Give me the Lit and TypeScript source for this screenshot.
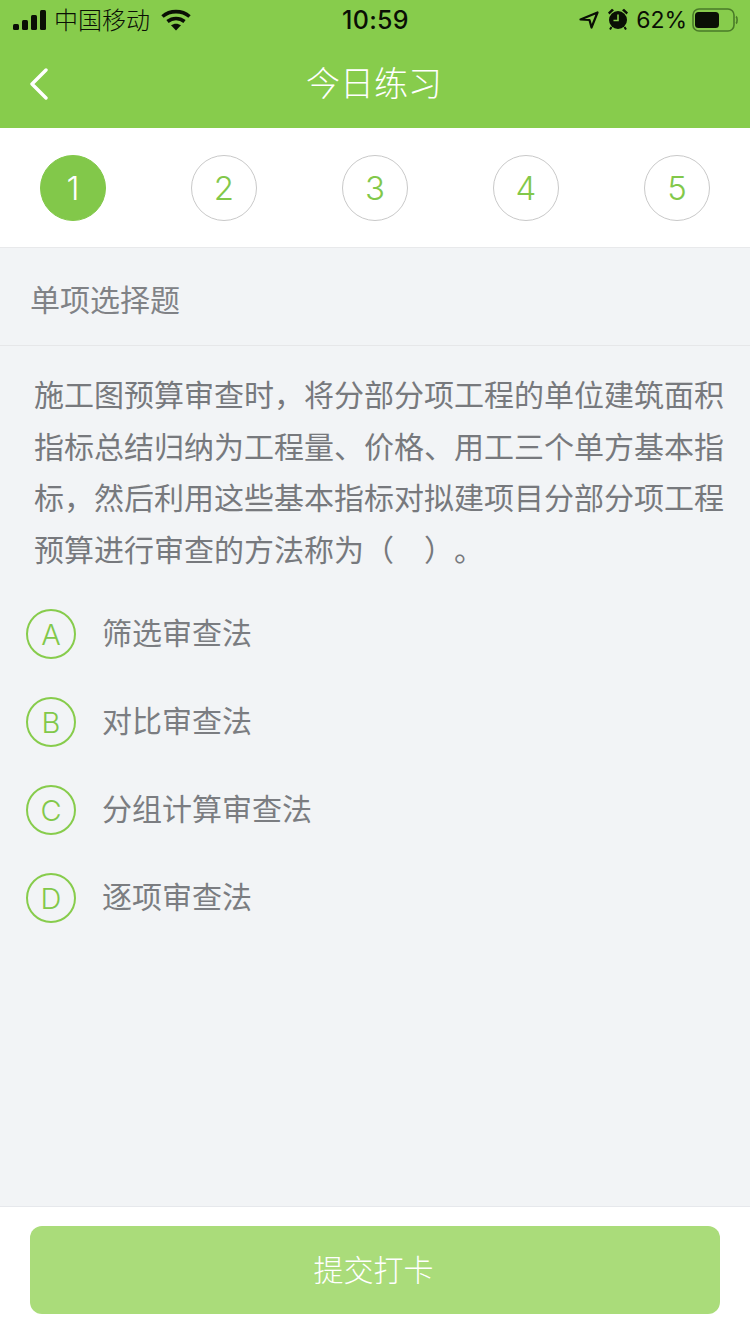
import { LitElement, html, css } from "lit";
import { customElement } from "lit/decorators.js";

@customElement("app-root")
export class AppRoot extends LitElement {
  static styles = css`
    :host {
      display: flex;
      flex-direction: column;
      width: 750px;
      height: 1334px;
      background: #f2f4f6;
      font-family: "Noto Sans CJK SC", "Liberation Sans", sans-serif;
      overflow: hidden;
    }
    .head { background: #87cc4c; flex: none; }
    .status {
      height: 40px;
      display: flex;
      align-items: center;
      padding: 0 12px 0 13px;
      color: #0a0f05;
      font-size: 25px;
    }
    .side { flex: 1; display: flex; align-items: center; }
    .side.right { justify-content: flex-end; }
    .carrier { font-size: 24px; margin-left: 8px; line-height: 38px; height: 40px; font-weight: 300; }
    .wifi { margin-left: 11px; }
    .time { font-size: 25px; font-weight: 500; letter-spacing: 0.3px; font-family: "Inter", sans-serif; }
    .pct { font-size: 23px; margin-left: 7px; font-weight: 400; font-family: "Inter", sans-serif; }
    .alarm { margin-left: 8px; margin-bottom: 2px; }
    .batt { margin-left: 5px; }
    .nav {
      height: 88px;
      display: grid;
      grid-template-columns: 1fr auto 1fr;
      align-items: center;
      padding-left: 30px;
    }
    .title {
      color: #fff;
      font-size: 34px;
      font-weight: 300;
      line-height: 84px;
      height: 88px;
      margin-left: -32px;
    }
    .back { display: block; }
    .steps {
      flex: none;
      height: 120px;
      box-sizing: border-box;
      background: #fff;
      border-bottom: 1px solid #e8e9eb;
      display: flex;
      justify-content: space-between;
      align-items: flex-start;
      padding: 27px 40px 0;
    }
    .step {
      width: 66px;
      height: 66px;
      box-sizing: border-box;
      border: 1px solid #c9c9c9;
      border-radius: 50%;
      display: flex;
      align-items: center;
      justify-content: center;
      color: #82c84a;
      font-size: 33px;
      font-weight: 300;
      font-family: "Inter", "Liberation Sans", sans-serif;
    }
    .step.on { background: #82c84a; border-color: #82c84a; color: #fff; }
    .kind {
      flex: none;
      height: 98px;
      box-sizing: border-box;
      border-bottom: 1px solid #e6e7e9;
      padding-left: 30px;
      line-height: 101px;
      font-weight: 400;
      font-size: 30px;
      color: #808286;
    }
    .main { flex: 1; min-height: 0; padding: 22px 26px 0 34px; font-weight: 400; }
    .q { margin: 0; font-size: 30px; line-height: 51.6px; color: #77797d; white-space: nowrap; text-spacing-trim: space-all; }
    .opts { margin: 35px 0 0 -8px; display: flex; flex-direction: column; gap: 38px; }
    .opt { display: flex; align-items: center; height: 50px; gap: 26px; font-size: 30px; color: #7b7d81; }
    .opt span { line-height: 44px; height: 50px; }
    .letter {
      width: 50px;
      height: 50px;
      box-sizing: border-box;
      border: 2px solid #87cc4c;
      border-radius: 50%;
      display: flex;
      align-items: center;
      justify-content: center;
      color: #82c84a;
      font-size: 29px;
      font-weight: 300;
      font-family: "Inter", "Liberation Sans", sans-serif;
    }
    .foot {
      flex: none;
      height: 128px;
      box-sizing: border-box;
      background: #fff;
      border-top: 1px solid #e6e8ec;
      padding: 19px 30px 0;
    }
    .btn {
      height: 88px;
      border-radius: 12px;
      background: #aadc7a;
      color: #fff;
      font-size: 30px;
      font-weight: 300;
      display: flex;
      align-items: center;
      justify-content: center;
      padding: 0 3px 5px 0;
      box-sizing: border-box;
    }
  `;

  render() {
    const q = [
      "施工图预算审查时，将分部分项工程的单位建筑面积",
      "指标总结归纳为工程量、价格、用工三个单方基本指",
      "标，然后利用这些基本指标对拟建项目分部分项工程",
      "预算进行审查的方法称为（\u3000）。",
    ];
    const opts = [
      ["A", "筛选审查法"],
      ["B", "对比审查法"],
      ["C", "分组计算审查法"],
      ["D", "逐项审查法"],
    ];
    return html`
      <div class="head">
        <div class="status">
          <div class="side">
            <svg width="33" height="20" viewBox="0 0 33 20" fill="#0a0f05">
              <rect x="0" y="14" width="6" height="6" rx="1.5" />
              <rect x="9" y="10" width="6" height="10" rx="1.5" />
              <rect x="18" y="5" width="6" height="15" rx="1.5" />
              <rect x="27" y="0" width="6" height="20" rx="1.5" />
            </svg>
            <span class="carrier">中国移动</span>
            <svg class="wifi" width="30" height="22" viewBox="0 0 30 22" fill="none" stroke="#0a0f05" stroke-width="3.6">
              <path d="M1.5 7.5C9 1 21 1 28.5 7.5" />
              <path d="M6.5 12.5C11.5 8.5 18.5 8.5 23.5 12.5" />
              <path d="M15 21.5L10 16.3C13 14.2 17 14.2 20 16.3Z" fill="#0a0f05" stroke="none" />
            </svg>
          </div>
          <div class="time">10:59</div>
          <div class="side right">
            <svg width="20" height="18" viewBox="0 0 20 18" fill="none" stroke="#0a0f05" stroke-width="2.2" stroke-linejoin="round">
              <path d="M1.5 8.5L18.5 1.5L12.5 16.5L10.5 9Z" />
            </svg>
            <svg class="alarm" width="22" height="22" viewBox="0 0 22 22">
              <circle cx="11" cy="12" r="9" fill="#0a0f05" />
              <path d="M11 6.5V12.5H6.5" fill="none" stroke="#87cc4c" stroke-width="1.6" />
              <path d="M1 4.5L5 0.8L7 2.2L2.4 6.4ZM21 4.5L17 0.8L15 2.2L19.6 6.4Z" fill="#0a0f05" />
              <path d="M4.5 19L3 21.5M17.5 19L19 21.5" stroke="#0a0f05" stroke-width="2" />
            </svg>
            <span class="pct">62%</span>
            <svg class="batt" width="46" height="24" viewBox="0 0 46 24">
              <rect x="1" y="1" width="41" height="22" rx="6" fill="none" stroke="#4a7a28" stroke-width="1.6" />
              <rect x="3" y="4" width="24" height="16" rx="3.5" fill="#0a0f05" />
              <path d="M44 8.5C45.5 9.5 45.5 14.5 44 15.5" fill="none" stroke="#4a7a28" stroke-width="1.6" />
            </svg>
          </div>
        </div>
        <div class="nav">
          <svg class="back" width="20" height="32" viewBox="0 0 20 32" fill="none" stroke="#fff" stroke-width="3.4" stroke-linecap="round" stroke-linejoin="round">
            <path d="M16 2L2 16L16 30" />
          </svg>
          <div class="title">今日练习</div>
          <div></div>
        </div>
      </div>
      <div class="steps">
        ${[1, 2, 3, 4, 5].map(
          (n) => html`<div class="step ${n === 1 ? "on" : ""}">${n}</div>`
        )}
      </div>
      <div class="kind">单项选择题</div>
      <div class="main">
        <p class="q">${q.map((l) => html`${l}<br />`)}</p>
        <div class="opts">
          ${opts.map(
            ([k, t]) => html`<div class="opt"><div class="letter">${k}</div><span>${t}</span></div>`
          )}
        </div>
      </div>
      <div class="foot"><div class="btn">提交打卡</div></div>
    `;
  }
}
